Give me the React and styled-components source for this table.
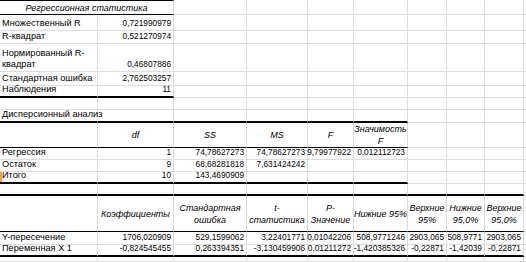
import React from 'react'
import styled, { createGlobalStyle } from 'styled-components'

const GlobalStyle = createGlobalStyle`
  html, body {
    margin: 0;
    padding: 0;
    background: #fff;
  }
  body {
    font-family: "Liberation Sans", Arial, sans-serif;
  }
`

const COLS = [98, 76, 73, 61, 46, 54, 39, 38, 39, 2]
const GRID = '#dcdcdc'

const Sheet = styled.div`
  display: grid;
  grid-template-columns: ${COLS.map((w) => w + 'px').join(' ')};
  width: 526px;
  height: 262px;
  overflow: hidden;
  color: #000;
`

const Cell = styled.div`
  box-sizing: border-box;
  height: ${(p) => p.$h}px;
  grid-column: span ${(p) => p.$span || 1};
  padding: 0 2px ${(p) => (p.$head ? 0 : 1)}px;
  display: flex;
  flex-direction: column;
  justify-content: ${(p) => (p.$head ? 'center' : 'flex-end')};
  align-items: ${(p) => (p.$align === 'right' ? 'flex-end' : p.$align === 'center' ? 'center' : 'flex-start')};
  text-align: ${(p) => p.$align || 'left'};
  font-style: ${(p) => (p.$italic ? 'italic' : 'normal')};
  font-size: ${(p) => (p.$italic ? 9 : p.$align === 'right' ? 8.3 : 9.2)}px;
  line-height: ${(p) => (p.$head ? '12px' : '11px')};
  white-space: nowrap;
  border-right: 1px solid ${GRID};
  border-bottom: ${(p) => (p.$line ? `${p.$line}px solid #000` : `1px solid ${GRID}`)};
  border-top: ${(p) => (p.$top ? '1px solid #000' : 'none')};
  box-shadow: ${(p) => (p.$mark ? 'inset 2px 0 0 #f2a33a' : 'none')};
`

const Label = styled.span`
  display: block;
`

const rows = [
  { h: 15, top: 2, line: { to: 2, w: 1 }, cells: [{ t: 'Регрессионная статистика', span: 2, italic: true, align: 'center', head: true }] },
  { h: 16, cells: ['Множественный R', { t: '0,721990979', align: 'right' }] },
  { h: 13, cells: ['R-квадрат', { t: '0,521270974', align: 'right' }] },
  { h: 28, cells: [{ t: ['Нормированный R-', 'квадрат'] }, { t: '0,46807886', align: 'right' }] },
  { h: 14, cells: ['Стандартная ошибка', { t: '2,762503257', align: 'right' }] },
  { h: 12, line: { to: 2, w: 2 }, cells: ['Наблюдения', { t: '11', align: 'right' }] },
  { h: 12, cells: [] },
  { h: 13, line: { to: 6, w: 2 }, cells: ['Дисперсионный анализ'] },
  {
    h: 25, line: { to: 6, w: 1 }, head: true,
    cells: ['', 'df', 'SS', 'MS', 'F', ['Значимость', 'F']]
  },
  { h: 12, num: true, cells: ['Регрессия', '1', '74,78627273', '74,78627273', '9,79977922', '0,012112723'] },
  { h: 12, num: true, cells: ['Остаток', '9', '68,68281818', '7,631424242'] },
  { h: 12, num: true, mark: true, line: { to: 6, w: 2 }, cells: ['Итого', '10', '143,4690909'] },
  { h: 12, line: { to: 9, w: 2 }, cells: [] },
  {
    h: 36, line: { to: 9, w: 1 }, head: true,
    cells: ['', 'Коэффициенты', ['Стандартная', 'ошибка'], ['t-', 'статистика'], ['P-', 'Значение'], 'Нижние 95%', ['Верхние', '95%'], ['Нижние', '95,0%'], ['Верхние', '95,0%']]
  },
  { h: 13, num: true, cells: ['Y-пересечение', '1706,020909', '529,1599062', '3,22401771', '0,01042206', '508,9771246', '2903,065', '508,9771', '2903,065'] },
  { h: 12, num: true, line: { to: 9, w: 2 }, cells: ['Переменная X 1', '-0,824545455', '0,263394351', '-3,130459906', '0,01211272', '-1,420385326', '-0,22871', '-1,42039', '-0,22871'] },
  { h: 5, cells: [] }
]

const normalize = (row, c, i) => {
  if (c && typeof c === 'object' && !Array.isArray(c)) return c
  const base = { t: c }
  if (row.head && i > 0) return { ...base, italic: true, align: 'center', head: true }
  if (row.num && i > 0) return { ...base, align: 'right' }
  return base
}

const SheetRow = ({ row }) => {
  const out = []
  let col = 0
  row.cells.forEach((raw, i) => {
    const c = normalize(row, raw, i)
    const span = c.span || 1
    const lines = Array.isArray(c.t) ? c.t : [c.t]
    out.push(
      <Cell
        key={col}
        $h={row.h}
        $span={span}
        $align={c.align}
        $italic={c.italic}
        $head={c.head || row.head}
        $line={row.line && col < row.line.to ? row.line.w : 0}
        $top={row.top && col < row.top}
        $mark={row.mark && col === 0}
      >
        {lines.map((l, k) => (
          <Label key={k}>{l}</Label>
        ))}
      </Cell>
    )
    col += span
  })
  while (col < COLS.length) {
    out.push(
      <Cell
        key={col}
        $h={row.h}
        $line={row.line && col < row.line.to ? row.line.w : 0}
        $top={row.top && col < row.top}
      />
    )
    col += 1
  }
  return out
}

export default function App() {
  return (
    <>
      <GlobalStyle />
      <Sheet>
        {rows.map((row, i) => (
          <SheetRow key={i} row={row} />
        ))}
      </Sheet>
    </>
  )
}
